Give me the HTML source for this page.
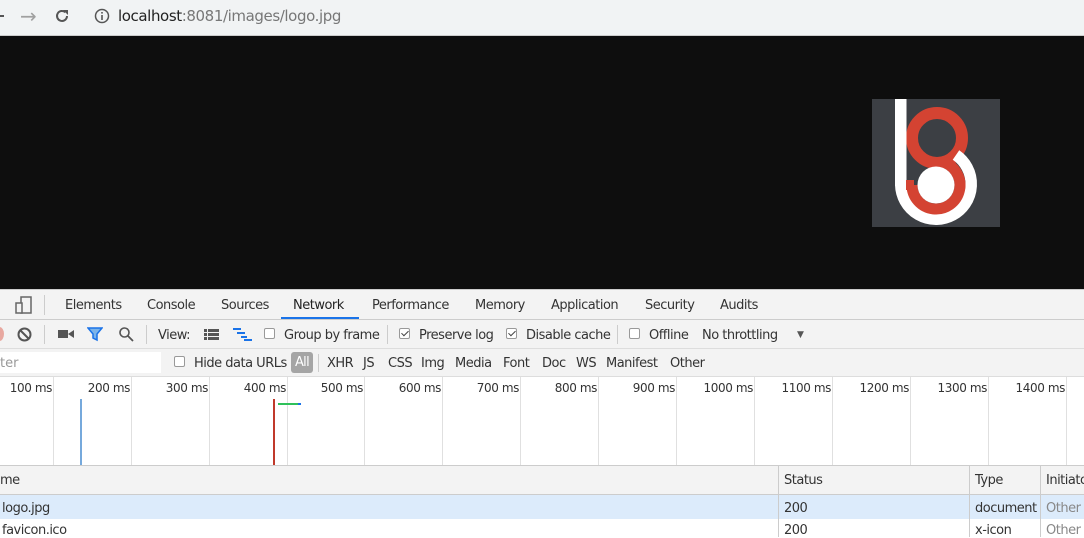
<!DOCTYPE html>
<html><head><meta charset="utf-8"><style>
*{margin:0;padding:0;box-sizing:border-box}
body{width:1084px;height:537px;overflow:hidden;position:relative;font-family:"DejaVu Sans","Liberation Sans",sans-serif;font-size:12.5px;color:#333;background:#fff}
.a{position:absolute;white-space:nowrap}
.t{font-size:13px;color:#333;letter-spacing:-0.5px;margin-top:1px}
.cb{position:absolute;width:11px;height:11px;border:1px solid #999;border-radius:2px;background:#fff}
.cb.c::after{content:"";position:absolute;left:3px;top:0px;width:3px;height:6px;border:solid #444;border-width:0 1.5px 1.5px 0;transform:rotate(45deg)}
.gl{position:absolute;top:377px;height:88px;width:1px;background:#e0e0e0}
.ml{position:absolute;top:381px;font-size:12px;color:#333;text-align:right;width:70px;letter-spacing:-0.4px}
</style></head><body>
<div class="a" style="left:0;top:0;width:1084px;height:35px;background:#f1f3f4"></div>
<div class="a" style="left:0;top:15px;width:4px;height:2px;background:#555"></div>
<div class="a" style="left:20px;top:4px;font-size:20px;color:#a0a0a0">→</div>
<svg class="a" style="left:53px;top:7px" width="18" height="18" viewBox="0 0 18 18"><path d="M14 9a5 5 0 1 1-1.6-3.7" fill="none" stroke="#555" stroke-width="2"/><path d="M10 3h5v5z" fill="#555"/></svg>
<svg class="a" style="left:94px;top:8px" width="16" height="16" viewBox="0 0 16 16"><circle cx="8" cy="8" r="6.5" fill="none" stroke="#555" stroke-width="1.5"/><rect x="7.2" y="7" width="1.6" height="5" fill="#555"/><rect x="7.2" y="4" width="1.6" height="1.6" fill="#555"/></svg>
<div class="a" style="left:118px;top:7px;font-size:15px;color:#222;letter-spacing:-0.4px">localhost<span style="color:#777">:8081/images/logo.jpg</span></div>
<div class="a" style="left:0;top:35px;width:1084px;height:1px;background:#ccc"></div>
<div class="a" style="left:0;top:36px;width:1084px;height:253px;background:#0e0e0e"></div>
<svg class="a" style="left:872px;top:99px" width="128" height="128" viewBox="0 0 128 128">
<rect width="128" height="128" fill="#3c3f44"/>
<circle cx="65" cy="39" r="25" fill="none" stroke="#d44332" stroke-width="12"/>
<rect x="23" y="0" width="11.5" height="87" fill="#fff"/>
<path d="M28.75 86 A35.25 35.25 0 1 0 84 56" fill="none" stroke="#fff" stroke-width="11.5"/>
<path d="M40 86 A24 24 0 1 0 72 63.4" fill="none" stroke="#d44332" stroke-width="11"/>
<rect x="34" y="81" width="8" height="10" fill="#d44332"/>
<circle cx="64" cy="86" r="18.5" fill="#fff"/>
</svg>
<div class="a" style="left:0;top:289px;width:1084px;height:1px;background:#ccc"></div>
<div class="a" style="left:0;top:290px;width:1084px;height:30px;background:#f3f3f3;border-bottom:1px solid #ccc"></div>
<svg class="a" style="left:14px;top:295px" width="20" height="20" viewBox="0 0 20 20"><rect x="7" y="2" width="10" height="16" fill="none" stroke="#666" stroke-width="1.5"/><rect x="2" y="8" width="6" height="10" fill="#f3f3f3" stroke="#666" stroke-width="1.5"/></svg>
<div class="a" style="left:44px;top:295px;width:1px;height:20px;background:#ccc"></div>
<div class="a t" style="left:65px;top:297px">Elements</div>
<div class="a t" style="left:147px;top:297px">Console</div>
<div class="a t" style="left:221px;top:297px">Sources</div>
<div class="a t" style="left:293px;top:297px;color:#222">Network</div>
<div class="a" style="left:281px;top:317px;width:78px;height:2px;background:#1a73e8"></div>
<div class="a t" style="left:372px;top:297px">Performance</div>
<div class="a t" style="left:475px;top:297px">Memory</div>
<div class="a t" style="left:551px;top:297px">Application</div>
<div class="a t" style="left:645px;top:297px">Security</div>
<div class="a t" style="left:720px;top:297px">Audits</div>
<div class="a" style="left:0;top:320px;width:1084px;height:29px;background:#f3f3f3;border-bottom:1px solid #ddd"></div>
<div class="a" style="left:-5px;top:327px;width:9px;height:14px;border-radius:50%;background:#e8a8a0"></div>
<svg class="a" style="left:17px;top:327px" width="15" height="15" viewBox="0 0 15 15"><circle cx="7.5" cy="7.5" r="6" fill="none" stroke="#555" stroke-width="2"/><path d="M3.5 3.5l8 8" stroke="#555" stroke-width="2"/></svg>
<div class="a" style="left:44px;top:325px;width:1px;height:19px;background:#ccc"></div>
<svg class="a" style="left:58px;top:328px" width="16" height="12" viewBox="0 0 16 12"><rect x="0" y="2" width="10" height="8" fill="#555"/><path d="M10 6l6-4v8z" fill="#555"/></svg>
<svg class="a" style="left:87px;top:326px" width="16" height="16" viewBox="0 0 16 16"><path d="M1 2h14l-5 6v6l-4-2v-4z" fill="#7cb4ea" stroke="#1a73e8" stroke-width="1.5"/></svg>
<svg class="a" style="left:118px;top:326px" width="16" height="16" viewBox="0 0 16 16"><circle cx="6.5" cy="6.5" r="4.5" fill="none" stroke="#555" stroke-width="1.6"/><path d="M10 10l5 5" stroke="#555" stroke-width="1.8"/></svg>
<div class="a" style="left:146px;top:325px;width:1px;height:19px;background:#ccc"></div>
<div class="a t" style="left:158px;top:327px">View:</div>
<svg class="a" style="left:204px;top:329px" width="15" height="11" viewBox="0 0 15 11"><g fill="#555"><rect x="0" y="0" width="3" height="3"/><rect x="4" y="0" width="11" height="3"/><rect x="0" y="4" width="3" height="3"/><rect x="4" y="4" width="11" height="3"/><rect x="0" y="8" width="3" height="3"/><rect x="4" y="8" width="11" height="3"/></g></svg>
<svg class="a" style="left:233px;top:328px" width="19" height="13" viewBox="0 0 19 13"><g fill="#1a73e8"><rect x="0" y="0" width="8" height="2"/><rect x="4" y="4" width="8" height="2"/><rect x="8" y="8" width="6" height="2"/><rect x="11" y="11" width="8" height="2"/></g></svg>
<div class="cb" style="left:264px;top:328px"></div>
<div class="a t" style="left:284px;top:327px">Group by frame</div>
<div class="a" style="left:387px;top:325px;width:1px;height:19px;background:#ccc"></div>
<div class="cb c" style="left:399px;top:328px"></div>
<div class="a t" style="left:419px;top:327px">Preserve log</div>
<div class="cb c" style="left:506px;top:328px"></div>
<div class="a t" style="left:526px;top:327px">Disable cache</div>
<div class="a" style="left:617px;top:325px;width:1px;height:19px;background:#ccc"></div>
<div class="cb" style="left:629px;top:328px"></div>
<div class="a t" style="left:649px;top:327px">Offline</div>
<div class="a t" style="left:702px;top:327px">No throttling</div>
<div class="a" style="left:797px;top:330px;font-size:9px;color:#555">▼</div>
<div class="a" style="left:0;top:349px;width:1084px;height:28px;background:#f3f3f3;border-bottom:1px solid #ddd"></div>
<div class="a" style="left:0;top:352px;width:161px;height:21px;background:#fff"></div>
<div class="a" style="left:0;top:356px;font-size:13px;color:#999">ter</div>
<div class="cb" style="left:174px;top:356px"></div>
<div class="a t" style="left:194px;top:355px">Hide data URLs</div>
<div class="a" style="left:291px;top:352px;width:22px;height:21px;border-radius:3px;background:#a5a5a5;color:#fff;font-size:13px;text-align:center;line-height:21px;letter-spacing:-0.7px">All</div>
<div class="a" style="left:318px;top:354px;width:1px;height:18px;background:#ccc"></div>
<div class="a t" style="left:327px;top:355px">XHR</div>
<div class="a t" style="left:363px;top:355px">JS</div>
<div class="a t" style="left:388px;top:355px">CSS</div>
<div class="a t" style="left:421px;top:355px">Img</div>
<div class="a t" style="left:455px;top:355px">Media</div>
<div class="a t" style="left:503px;top:355px">Font</div>
<div class="a t" style="left:542px;top:355px">Doc</div>
<div class="a t" style="left:576px;top:355px">WS</div>
<div class="a t" style="left:606px;top:355px">Manifest</div>
<div class="a t" style="left:670px;top:355px">Other</div>
<div class="gl" style="left:53px"></div><div class="gl" style="left:131px"></div><div class="gl" style="left:209px"></div><div class="gl" style="left:287px"></div><div class="gl" style="left:364px"></div><div class="gl" style="left:442px"></div><div class="gl" style="left:520px"></div><div class="gl" style="left:598px"></div><div class="gl" style="left:676px"></div><div class="gl" style="left:754px"></div><div class="gl" style="left:832px"></div><div class="gl" style="left:910px"></div><div class="gl" style="left:988px"></div><div class="gl" style="left:1066px"></div>
<div class="ml" style="left:-18px">100 ms</div><div class="ml" style="left:60px">200 ms</div><div class="ml" style="left:138px">300 ms</div><div class="ml" style="left:216px">400 ms</div><div class="ml" style="left:293px">500 ms</div><div class="ml" style="left:371px">600 ms</div><div class="ml" style="left:449px">700 ms</div><div class="ml" style="left:527px">800 ms</div><div class="ml" style="left:605px">900 ms</div><div class="ml" style="left:683px">1000 ms</div><div class="ml" style="left:761px">1100 ms</div><div class="ml" style="left:839px">1200 ms</div><div class="ml" style="left:917px">1300 ms</div><div class="ml" style="left:995px">1400 ms</div>
<div class="a" style="left:80px;top:399px;width:2px;height:66px;background:#76a9dc"></div>
<div class="a" style="left:273px;top:399px;width:2px;height:66px;background:#c0392b"></div>
<div class="a" style="left:278px;top:403px;width:20px;height:2px;background:#2fc15a"></div>
<div class="a" style="left:298px;top:403px;width:3px;height:2px;background:#1a73e8"></div>
<div class="a" style="left:0;top:465px;width:1084px;height:30px;background:#f3f3f3;border-top:1px solid #ccc;border-bottom:1px solid #ccc"></div>
<div class="a" style="left:0;top:495px;width:1084px;height:24px;background:#dcebfb"></div>
<div class="a" style="left:778px;top:466px;width:1px;height:71px;background:#ccc"></div>
<div class="a" style="left:969px;top:466px;width:1px;height:71px;background:#ccc"></div>
<div class="a" style="left:1040px;top:466px;width:1px;height:71px;background:#ccc"></div>
<div class="a t" style="left:0;top:472px">me</div>
<div class="a t" style="left:784px;top:472px">Status</div>
<div class="a t" style="left:975px;top:472px">Type</div>
<div class="a t" style="left:1046px;top:472px">Initiator</div>
<div class="a t" style="left:2px;top:500px">logo.jpg</div>
<div class="a t" style="left:784px;top:500px">200</div>
<div class="a t" style="left:975px;top:500px">document</div>
<div class="a t" style="left:1046px;top:500px;color:#888">Other</div>
<div class="a t" style="left:2px;top:522px">favicon.ico</div>
<div class="a t" style="left:784px;top:522px">200</div>
<div class="a t" style="left:975px;top:522px">x-icon</div>
<div class="a t" style="left:1046px;top:522px;color:#888">Other</div>
</body></html>
